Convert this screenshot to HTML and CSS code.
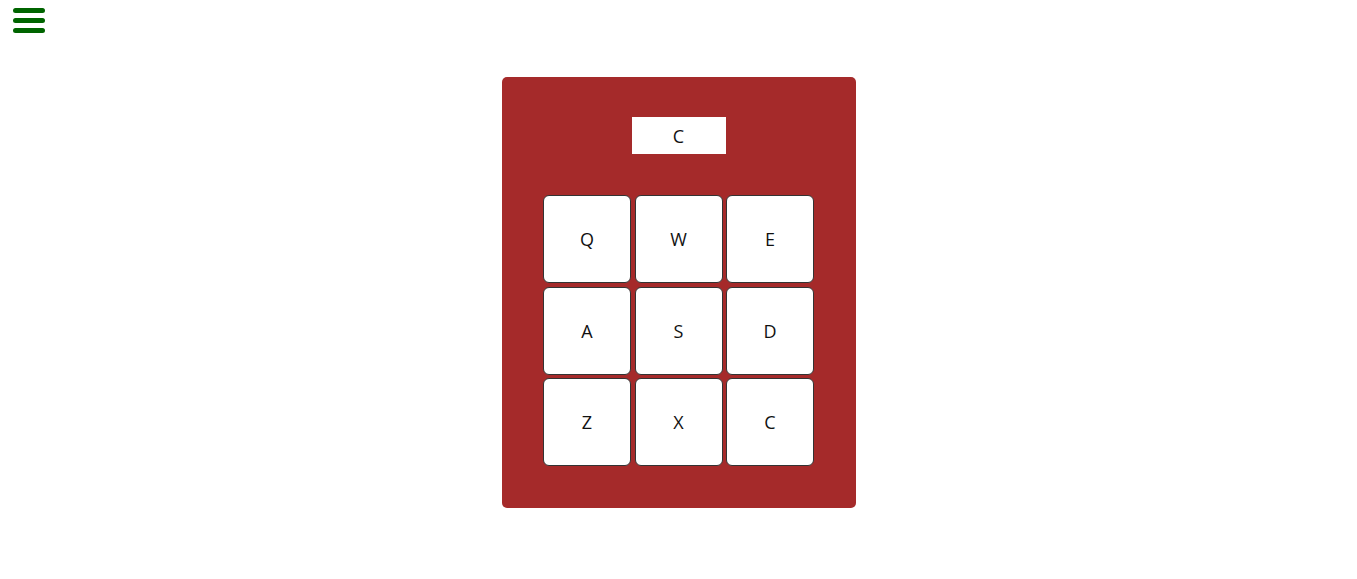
FILE: index.html
```html
<!DOCTYPE html>
<html lang="en">
<head>
    <meta charset="UTF-8">
    <meta name="viewport" content="width=device-width, initial-scale=1.0">
    <title>Drum Machine</title>
    <link rel="stylesheet" href="styles.css">
</head>
<body>
    <!-- Menu button -->
    <header class="top-bar">
        <button class="menu-btn" aria-label="Menu">
            <svg width="32" height="26" viewBox="0 0 32 26">
                <line x1="2.5" y1="2.5" x2="29.5" y2="2.5" />
                <line x1="2.5" y1="12.5" x2="29.5" y2="12.5" />
                <line x1="2.5" y1="22.5" x2="29.5" y2="22.5" />
            </svg>
        </button>
    </header>

    <!-- Drum machine -->
    <main class="machine">
        <div class="display">C</div>
        <div class="pads">
            <div class="pad">Q</div>
            <div class="pad">W</div>
            <div class="pad">E</div>
            <div class="pad">A</div>
            <div class="pad">S</div>
            <div class="pad">D</div>
            <div class="pad">Z</div>
            <div class="pad">X</div>
            <div class="pad">C</div>
        </div>
    </main>
</body>
</html>
```

FILE: styles.css
```css
/* Basic reset */
body {
    margin: 0;
    font-family: "Open Sans", "Noto Sans", Arial, sans-serif;
    background-color: white;
    color: #111;
}

/* Menu button at top left */
.top-bar {
    height: 77px;
}

.menu-btn {
    display: block;
    margin: 0;
    padding: 0;
    border: none;
    background: none;
    position: relative;
    left: 13px;
    top: 8px;
}

.menu-btn svg line {
    stroke: #006400;
    stroke-width: 5;
    stroke-linecap: round;
}

/* Drum machine box */
.machine {
    width: 354px;
    height: 431px;
    box-sizing: border-box;
    margin: 0 auto;
    padding-top: 40px;
    background-color: #a52a2a;
    border-radius: 5px;
    display: flex;
    flex-direction: column;
    align-items: center;
}

.display {
    width: 94px;
    height: 37px;
    background-color: white;
    display: flex;
    align-items: center;
    justify-content: center;
    font-size: 18px;
}

.pads {
    margin-top: 41px;
    display: grid;
    grid-template-columns: repeat(3, 88px);
    grid-auto-rows: 88px;
    gap: 3.5px;
}

.pad {
    box-sizing: border-box;
    background-color: white;
    border: 1px solid #333;
    border-radius: 6px;
    display: flex;
    align-items: center;
    justify-content: center;
    font-size: 18px;
}
```
